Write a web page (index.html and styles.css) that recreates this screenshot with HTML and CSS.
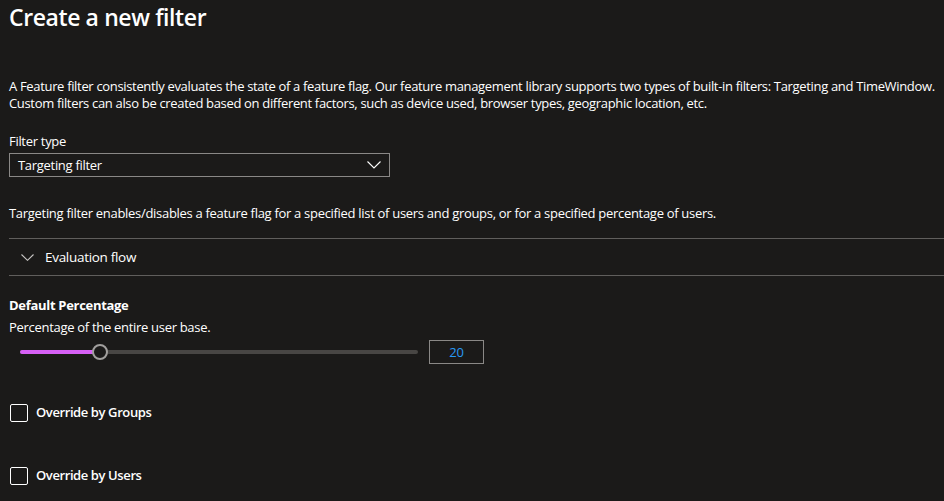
FILE: index.html
```html
<!DOCTYPE html>
<html lang="en">
<head>
<meta charset="utf-8">
<title>Create a new filter</title>
<link rel="stylesheet" href="styles.css">
</head>
<body>
<main class="panel">
  <h1 class="title">Create a new filter</h1>
  <p class="intro">A Feature filter consistently evaluates the state of a feature flag. Our feature management library supports two types of built-in filters: Targeting and TimeWindow.<br>Custom filters can also be created based on different factors, such as device used, browser types, geographic location, etc.</p>

  <div class="field">
    <label class="label">Filter type</label>
    <div class="dropdown">
      <span class="dropdown-text">Targeting filter</span>
      <svg class="dropdown-chevron" width="14" height="8" viewBox="0 0 14 8"><path d="M0.5 0.5 L7 7 L13.5 0.5" fill="none" stroke="#ffffff" stroke-width="1.1"/></svg>
    </div>
  </div>

  <p class="desc">Targeting filter enables/disables a feature flag for a specified list of users and groups, or for a specified percentage of users.</p>

  <div class="section">
    <svg class="section-chevron" width="13" height="7" viewBox="0 0 13 7"><path d="M0.5 0.5 L6.5 6.3 L12.5 0.5" fill="none" stroke="#c8c6c4" stroke-width="1.1"/></svg>
    <span class="section-text">Evaluation flow</span>
  </div>

  <div class="percent">
    <div class="percent-title">Default Percentage</div>
    <div class="percent-sub">Percentage of the entire user base.</div>
    <div class="slider-row">
      <div class="slider">
        <div class="track">
          <div class="fill" style="width: 20%"></div>
          <div class="thumb" style="left: 20%"></div>
        </div>
      </div>
      <div class="number">20</div>
    </div>
  </div>

  <label class="check check-groups">
    <span class="box"></span>
    <span class="check-text">Override by Groups</span>
  </label>
  <label class="check check-users">
    <span class="box"></span>
    <span class="check-text">Override by Users</span>
  </label>
</main>
</body>
</html>
```
FILE: styles.css
```css
html, body {
  margin: 0;
  padding: 0;
  background: #1b1a19;
}
body {
  color: #ffffff;
  font-family: "Segoe UI", "Open Sans", "Noto Sans", sans-serif;
  font-size: 13px;
  letter-spacing: -0.3px;
  width: 944px;
  height: 501px;
  overflow: hidden;
}
.panel {
  padding-left: 9px;
}
.title {
  margin: 0;
  padding-top: 1px;
  font-size: 23px;
  line-height: 32px;
  font-weight: 600;
  letter-spacing: -0.4px;
}
.intro {
  margin: 45px 0 0;
  line-height: 17px;
  white-space: nowrap;
  letter-spacing: -0.33px;
}
.field {
  margin-top: 21px;
}
.label {
  display: block;
  line-height: 17px;
}
.dropdown {
  margin-top: 3px;
  height: 22px;
  border: 1px solid #8a8886;
  display: flex;
  align-items: center;
  justify-content: space-between;
  padding-left: 8px;
  padding-right: 8px;
  box-sizing: content-box;
  width: 363px;
}
.dropdown-chevron {
  display: block;
}
.desc {
  margin: 28px 0 0;
  line-height: 17px;
  white-space: nowrap;
}
.section {
  margin-top: 16px;
  height: 36px;
  border-top: 1px solid #605e5c;
  border-bottom: 1px solid #605e5c;
  display: flex;
  align-items: center;
  padding-left: 12px;
  gap: 11px;
}
.section-chevron {
  display: block;
}
.section-text {
  font-size: 13.5px;
  margin-top: -1px;
}
.percent {
  margin-top: 21px;
}
.percent-title {
  font-weight: 700;
  line-height: 17px;
}
.percent-sub {
  margin-top: 5px;
  line-height: 17px;
}
.slider-row {
  margin-top: 4px;
  display: flex;
  align-items: center;
  gap: 11px;
}
.slider {
  width: 398px;
  margin-left: 11px;
  height: 24px;
  display: flex;
  align-items: center;
}
.track {
  position: relative;
  width: 100%;
  height: 4px;
  border-radius: 2px;
  background: #484644;
}
.fill {
  height: 4px;
  border-radius: 2px;
  background: #d660f5;
}
.thumb {
  position: absolute;
  top: 50%;
  width: 12px;
  height: 12px;
  border: 2px solid #a19f9d;
  border-radius: 50%;
  background: #1b1a19;
  transform: translate(-50%, -50%);
}
.number {
  width: 53px;
  height: 22px;
  border: 1px solid #8a8886;
  color: #2899f5;
  display: flex;
  align-items: center;
  justify-content: center;
}
.check {
  display: flex;
  align-items: center;
  gap: 8px;
  margin-left: 1px;
  height: 19px;
}
.check-groups {
  margin-top: 39px;
}
.check-users {
  margin-top: 44px;
}
.box {
  width: 16px;
  height: 16px;
  border: 1px solid #ffffff;
  border-radius: 2px;
}
.check-text {
  font-weight: 600;
  letter-spacing: -0.4px;
  margin-top: -2px;
}
```
